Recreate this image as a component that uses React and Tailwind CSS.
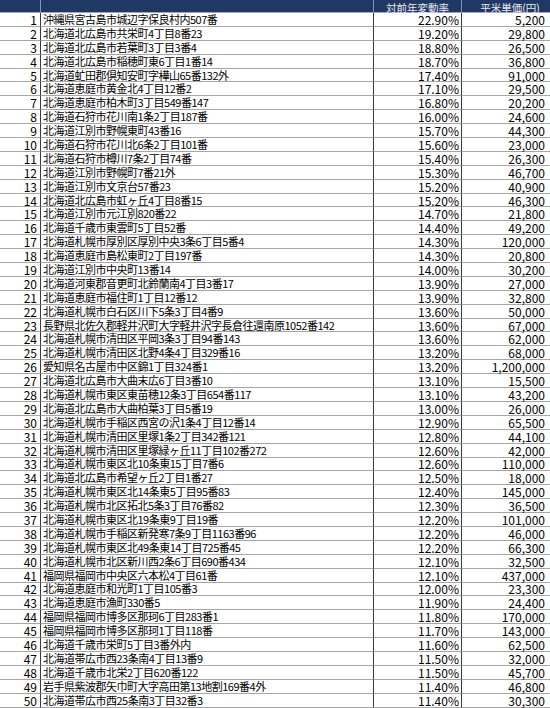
import React from 'react';

const rows = [
  ['沖縄県宮古島市城辺字保良村内507番', '22.90%', '5,200'],
  ['北海道北広島市共栄町4丁目8番23', '19.20%', '29,800'],
  ['北海道北広島市若葉町3丁目3番4', '18.80%', '26,500'],
  ['北海道北広島市稲穂町東6丁目1番14', '18.70%', '36,800'],
  ['北海道虻田郡倶知安町字樺山65番132外', '17.40%', '91,000'],
  ['北海道恵庭市黄金北4丁目12番2', '17.10%', '29,500'],
  ['北海道恵庭市柏木町3丁目549番147', '16.80%', '20,200'],
  ['北海道石狩市花川南1条2丁目187番', '16.00%', '24,600'],
  ['北海道江別市野幌東町43番16', '15.70%', '44,300'],
  ['北海道石狩市花川北6条2丁目101番', '15.60%', '23,000'],
  ['北海道石狩市樽川7条2丁目74番', '15.40%', '26,300'],
  ['北海道江別市野幌町7番21外', '15.30%', '46,700'],
  ['北海道江別市文京台57番23', '15.20%', '40,900'],
  ['北海道北広島市虹ヶ丘4丁目8番15', '15.20%', '46,300'],
  ['北海道江別市元江別820番22', '14.70%', '21,800'],
  ['北海道千歳市東雲町5丁目52番', '14.40%', '49,200'],
  ['北海道札幌市厚別区厚別中央3条6丁目5番4', '14.30%', '120,000'],
  ['北海道恵庭市島松東町2丁目197番', '14.30%', '20,800'],
  ['北海道江別市中央町13番14', '14.00%', '30,200'],
  ['北海道河東郡音更町北鈴蘭南4丁目3番17', '13.90%', '27,000'],
  ['北海道恵庭市福住町1丁目12番12', '13.90%', '32,800'],
  ['北海道札幌市白石区川下5条3丁目4番9', '13.60%', '50,000'],
  ['長野県北佐久郡軽井沢町大字軽井沢字長倉往還南原1052番142', '13.60%', '67,000'],
  ['北海道札幌市清田区平岡3条3丁目94番143', '13.60%', '62,000'],
  ['北海道札幌市清田区北野4条4丁目329番16', '13.20%', '68,000'],
  ['愛知県名古屋市中区錦1丁目324番1', '13.20%', '1,200,000'],
  ['北海道北広島市大曲末広6丁目3番10', '13.10%', '15,500'],
  ['北海道札幌市東区東苗穂12条3丁目654番117', '13.10%', '43,200'],
  ['北海道北広島市大曲柏葉3丁目5番19', '13.00%', '26,000'],
  ['北海道札幌市手稲区西宮の沢1条4丁目12番14', '12.90%', '65,500'],
  ['北海道札幌市清田区里塚1条2丁目342番121', '12.80%', '44,100'],
  ['北海道札幌市清田区里塚緑ヶ丘11丁目102番272', '12.60%', '42,000'],
  ['北海道札幌市東区北10条東15丁目7番6', '12.60%', '110,000'],
  ['北海道北広島市希望ヶ丘2丁目1番27', '12.50%', '18,000'],
  ['北海道札幌市東区北14条東5丁目95番83', '12.40%', '145,000'],
  ['北海道札幌市北区拓北5条3丁目76番82', '12.30%', '36,500'],
  ['北海道札幌市東区北19条東9丁目19番', '12.20%', '101,000'],
  ['北海道札幌市手稲区新発寒7条9丁目1163番96', '12.20%', '46,000'],
  ['北海道札幌市東区北49条東14丁目725番45', '12.20%', '66,300'],
  ['北海道札幌市北区新川西2条6丁目690番434', '12.10%', '32,500'],
  ['福岡県福岡市中央区六本松4丁目61番', '12.10%', '437,000'],
  ['北海道恵庭市和光町1丁目105番3', '12.00%', '23,300'],
  ['北海道恵庭市漁町330番5', '11.90%', '24,400'],
  ['福岡県福岡市博多区那珂6丁目283番1', '11.80%', '170,000'],
  ['福岡県福岡市博多区那珂1丁目118番', '11.70%', '143,000'],
  ['北海道千歳市栄町5丁目3番外内', '11.60%', '62,500'],
  ['北海道帯広市西23条南4丁目13番9', '11.50%', '32,000'],
  ['北海道千歳市北栄2丁目620番122', '11.50%', '45,700'],
  ['岩手県紫波郡矢巾町大字高田第13地割169番4外', '11.40%', '46,800'],
  ['北海道帯広市西25条南3丁目32番3', '11.40%', '30,300'],
];

const cell = 'h-[13.9px] flex items-center border-b border-[#a6a6a6] whitespace-nowrap leading-[13px]';
const head = 'h-[13px] bg-[#203864] border-b border-b-[#a6a6a6]';

const App = () => {
  return (
    <div
      className="w-[550px] h-[708px] bg-white text-black overflow-hidden"
      style={{ fontFamily: '"Noto Sans CJK JP", "Noto Sans", sans-serif' }}
    >
      <div className="grid grid-cols-[41px_333px_88px_88px]">
        {/* Header */}
        <div className={`${head} border-r border-r-[#8496b0]`} />
        <div className={`${head} border-r border-r-[#8496b0]`} />
        <div className={`${head} border-r border-r-[#8496b0] flex items-center justify-center pt-[2px] text-[#e7e9ef] text-[10.5px] leading-[11px]`}>
          対前年変動率
        </div>
        <div className={`${head} flex items-center justify-center pl-2 pt-[2px] text-[#e7e9ef] text-[10.5px] leading-[11px]`}>
          平米単価(円)
        </div>

        {/* Body */}
        {rows.map(([addr, rate, price], i) => (
          <React.Fragment key={i}>
            <div className={`${cell} justify-end pr-[3px] border-r border-r-[#3a3a3a] text-[12px]`}>{i + 1}</div>
            <div className={`${cell} pl-[2px] border-r border-r-[#3a3a3a] text-[11px] tracking-[-0.5px]`}>{addr}</div>
            <div className={`${cell} justify-end pr-[2px] border-r border-r-[#3a3a3a] text-[12px]`}>{rate}</div>
            <div className={`${cell} justify-end pr-[5px] text-[12px]`}>{price}</div>
          </React.Fragment>
        ))}
      </div>
    </div>
  );
};

export default App;
